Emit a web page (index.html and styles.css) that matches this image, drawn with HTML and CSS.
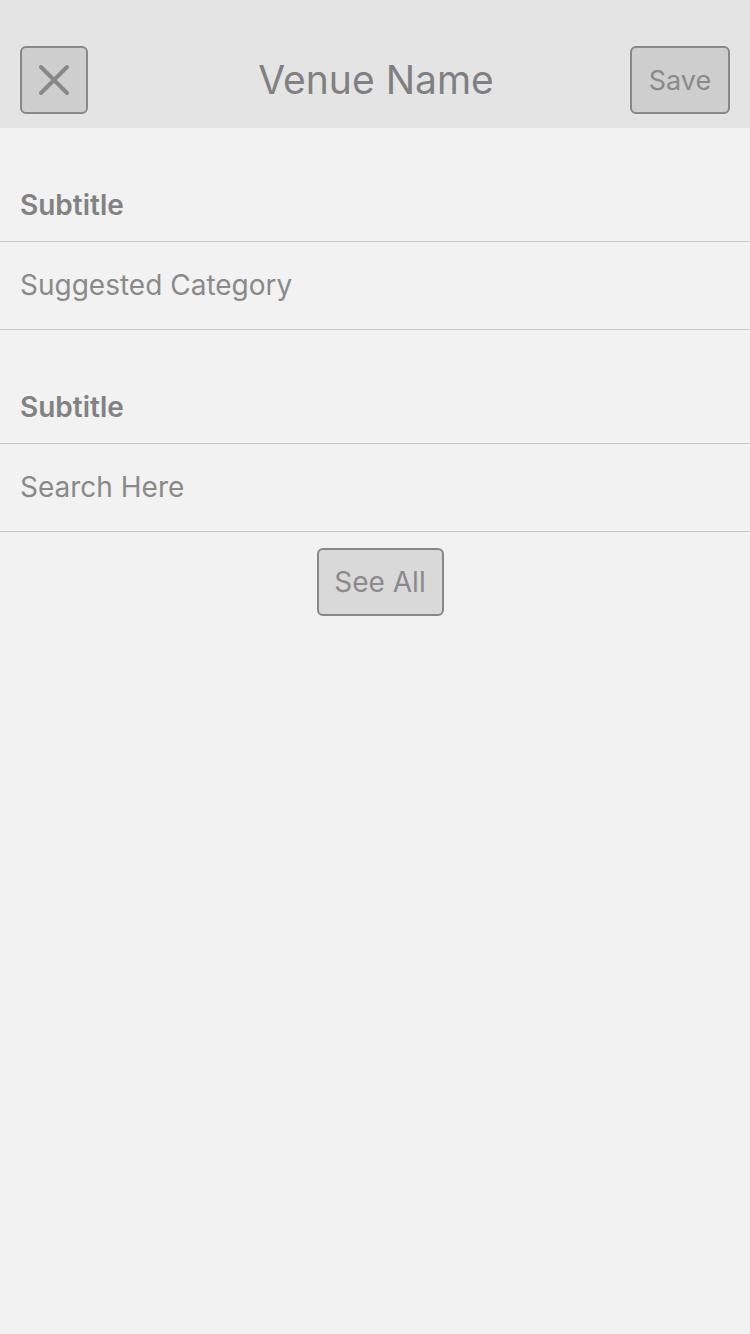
FILE: index.html
```html
<!DOCTYPE html>
<html>
<head>
<meta charset="utf-8">
<link rel="stylesheet" href="styles.css">
</head>
<body>
<div class="app">
  <header class="topbar">
    <button class="icon-btn" aria-label="Close">
      <svg width="34" height="34" viewBox="0 0 34 34"><path d="M4 4 L30 30 M30 4 L4 30" stroke="#888" stroke-width="4" stroke-linecap="round" fill="none"/></svg>
    </button>
    <h1 class="title">Venue Name</h1>
    <button class="text-btn">Save</button>
  </header>
  <main class="content">
    <section class="group">
      <div class="group-head">Subtitle</div>
      <div class="row">Suggested Category</div>
    </section>
    <section class="group">
      <div class="group-head">Subtitle</div>
      <div class="row">Search Here</div>
    </section>
    <div class="actions">
      <button class="see-all">See All</button>
    </div>
  </main>
</div>
</body>
</html>
```
FILE: styles.css
```css
* { box-sizing: border-box; }
html, body { margin: 0; padding: 0; }
body {
  background: #f2f2f2;
  font-family: Inter, "Liberation Sans", Arial, sans-serif;
  color: #808080;
  width: 750px;
  height: 1334px;
}
.topbar {
  background: #e4e4e4;
  height: 128px;
  display: flex;
  align-items: flex-start;
  justify-content: space-between;
  padding: 46px 20px 0 20px;
}
.icon-btn {
  width: 68px;
  height: 68px;
  background: #cecece;
  border: 2px solid #888;
  border-radius: 6px;
  padding: 0;
  display: flex;
  align-items: center;
  justify-content: center;
}
.title {
  margin: 0;
  font-weight: 400;
  font-size: 39px;
  line-height: 68px;
  color: #808080;
  flex: 1;
  text-align: center;
  padding-left: 34px;
}
.text-btn {
  width: 100px;
  height: 68px;
  background: #cecece;
  border: 2px solid #888;
  border-radius: 6px;
  font-family: inherit;
  font-size: 27px;
  color: #8a8a8a;
  padding: 0;
}
.group-head {
  padding: 62px 20px 21px;
  line-height: 30px;
  font-size: 28px;
  font-weight: 600;
  color: #828282;
  border-bottom: 1px solid #c8c8c8;
}
.row {
  padding: 28px 20px 29px;
  line-height: 30px;
  font-size: 28px;
  color: #8a8a8a;
  border-bottom: 1px solid #c8c8c8;
}
.actions {
  display: flex;
  justify-content: center;
  padding-top: 16px;
  padding-left: 10px;
}
.see-all {
  width: 127px;
  height: 68px;
  background: #d9d9d9;
  border: 2px solid #888;
  border-radius: 6px;
  font-family: inherit;
  font-size: 28px;
  color: #8a8a8a;
  padding: 0;
}
```
